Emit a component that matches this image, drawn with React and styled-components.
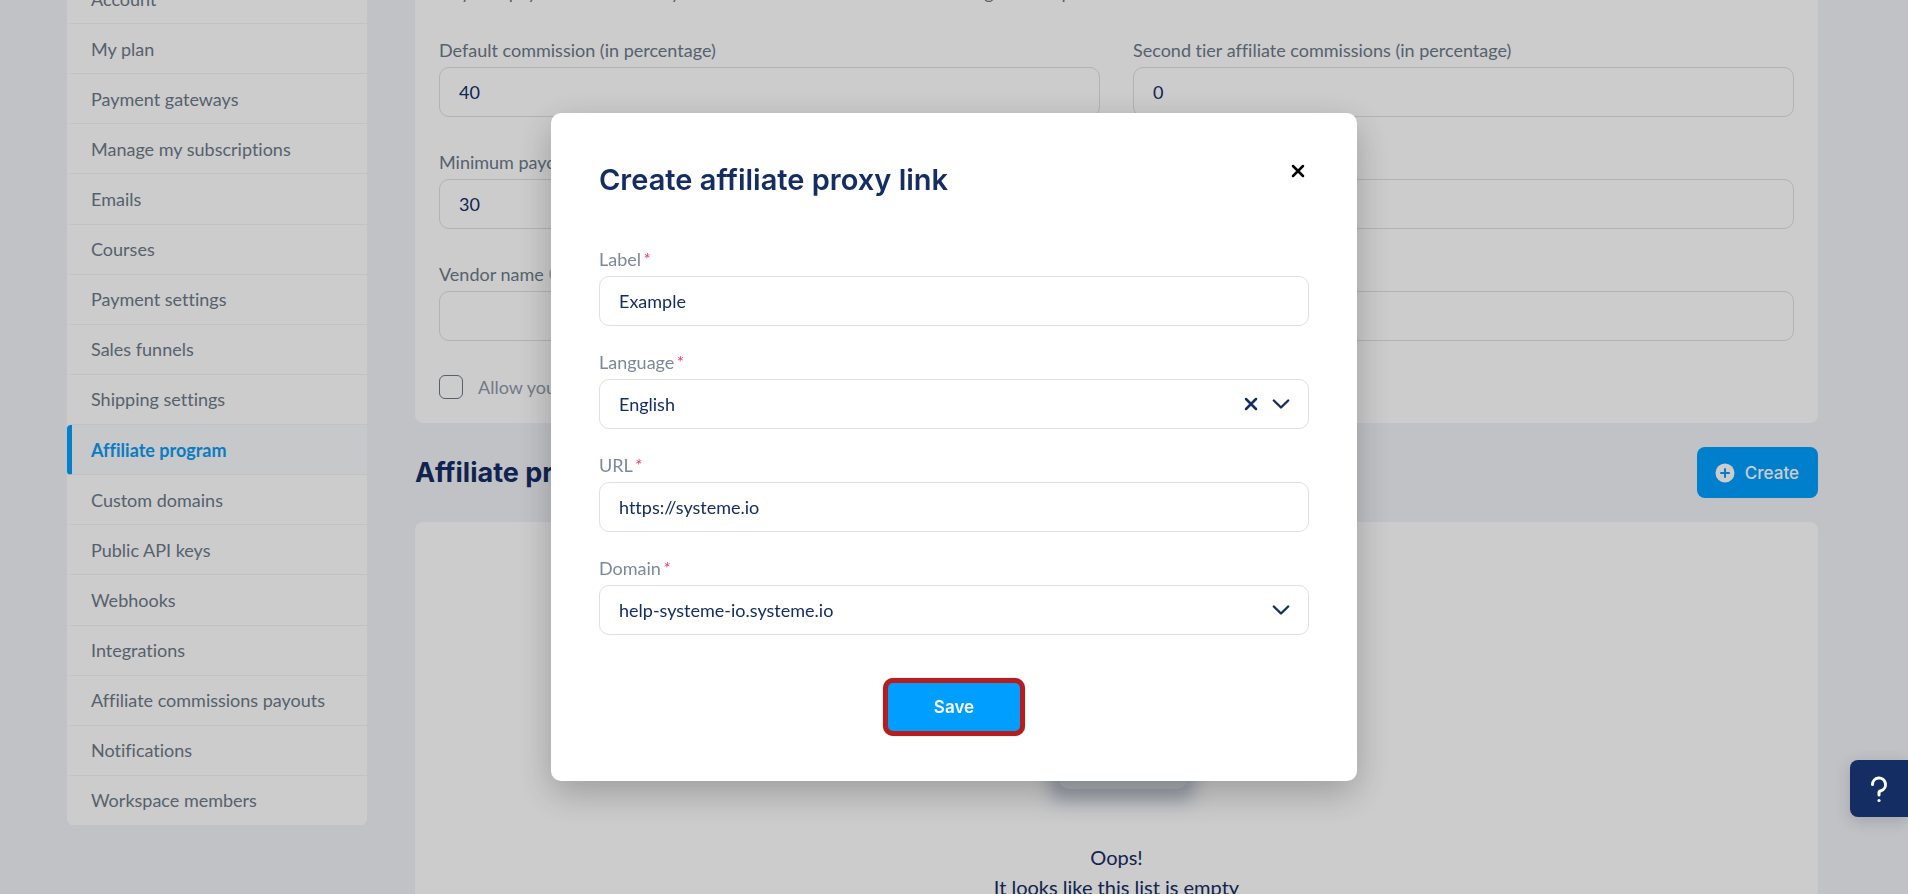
import React, { useState } from "react";
import styled, { createGlobalStyle } from "styled-components";

const GlobalStyle = createGlobalStyle`
  * {
    box-sizing: border-box;
  }

  body {
    margin: 0;
    overflow: hidden;
    background-color: #f1f3f8;
    color: #142d63;
    font-family: Lato, sans-serif;
    font-size: 18px;
    font-variant-ligatures: none;
    line-height: 22px;
  }

  button,
  input,
  select {
    font: inherit;
    font-variant-ligatures: none;
    color: inherit;
  }
`;

const Page = styled.div`
  display: flex;
  align-items: flex-start;
  gap: 48px;
  height: 100vh;
  padding: 0 90px 0 67px;
  overflow: hidden;
`;

const Sidebar = styled.nav`
  display: grid;
  grid-auto-rows: 1fr;
  flex: 0 0 300px;
  min-height: 852px;
  margin-top: -26px;
  background-color: #ffffff;
  border-radius: 8px;
  overflow: hidden;
`;

const SidebarLink = styled.a`
  display: flex;
  align-items: center;
  padding: 0 19px;
  border-left: 5px solid ${({ $active }) => ($active ? "#009fff" : "transparent")};
  border-bottom: 1px solid #f1f3f5;
  border-radius: ${({ $active }) => ($active ? "4px 0 0 4px" : "0")};
  background-color: ${({ $active }) => ($active ? "#f8fafc" : "#ffffff")};
  color: ${({ $active }) => ($active ? "#0d9bf5" : "#6c7a89")};
  font-weight: ${({ $active }) => ($active ? 700 : 400)};
  text-decoration: none;
`;

const Content = styled.main`
  flex: 1;
  min-width: 0;
  margin-top: -43px;
`;

const Card = styled.section`
  padding: 24px;
  background-color: #ffffff;
  border-radius: 8px;
`;

const Description = styled.p`
  margin: 0 0 36px;
  color: #6c7a89;
`;

const SettingsGrid = styled.div`
  display: grid;
  grid-template-columns: 1fr 1fr;
  gap: 34px 33px;
`;

const Field = styled.div`
  display: flex;
  flex-direction: column;
  gap: 6px;
`;

const Label = styled.label`
  display: flex;
  align-items: center;
  color: ${({ $muted }) => ($muted ? "#7c889b" : "#6c7a89")};
`;

const Required = styled.span`
  margin-left: 2px;
  color: #ef3e6b;
  font-style: italic;
`;

const Input = styled.input`
  width: 100%;
  height: 50px;
  padding: 0 19px;
  border: 1px solid #dfe0e2;
  border-radius: 10px;
  background-color: #ffffff;
  outline: none;
`;

const CheckRow = styled.label`
  display: flex;
  align-items: center;
  gap: 15px;
  margin-top: 34px;
  color: #9099a9;
`;

const Checkbox = styled.input`
  appearance: none;
  width: 24px;
  height: 24px;
  margin: 0;
  border: 1px solid #6c7a89;
  border-radius: 6px;
`;

const SectionHeader = styled.div`
  display: flex;
  align-items: center;
  justify-content: space-between;
  padding: 24px 0;
`;

const SectionTitle = styled.h2`
  margin: 0;
  font-family: Inter, sans-serif;
  font-size: 27px;
  font-weight: 700;
  line-height: 32px;
`;

const CreateButton = styled.button`
  display: flex;
  align-items: center;
  gap: 10px;
  height: 51px;
  padding: 0 19px 0 18px;
  border: none;
  border-radius: 8px;
  background-color: #009fff;
  color: #ffffff;
  font-family: Inter, sans-serif;
  font-size: 17px;
  font-weight: 500;
  cursor: pointer;
`;

const EmptyCard = styled(Card)`
  display: flex;
  flex-direction: column;
  align-items: center;
  min-height: 480px;
  padding-top: 48px;
`;

const EmptyText = styled.p`
  margin: 53px 0 0;
  font-size: 20px;
  line-height: 30px;
  text-align: center;
`;

const HelpButton = styled.button`
  position: fixed;
  right: 0;
  bottom: 77px;
  z-index: 3;
  display: flex;
  align-items: center;
  justify-content: center;
  width: 58px;
  height: 57px;
  padding: 0;
  border: none;
  border-radius: 8px 0 0 8px;
  background-color: #142d63;
  box-shadow: 0 4px 16px rgba(0, 0, 0, 0.16);
  cursor: pointer;
`;

const Overlay = styled.div`
  position: fixed;
  inset: 0;
  z-index: 2;
  display: flex;
  align-items: center;
  justify-content: center;
  background-color: rgba(0, 0, 0, 0.2);
`;

const Modal = styled.form`
  width: 100%;
  max-width: 806px;
  padding: 48px 48px 45px;
  border-radius: 10px;
  background-color: #ffffff;
  box-shadow: 0 12px 36px rgba(0, 0, 0, 0.24);
`;

const ModalHeader = styled.header`
  display: flex;
  align-items: flex-start;
  justify-content: space-between;
  margin-bottom: 50px;
`;

const ModalTitle = styled.h1`
  margin: 0;
  font-family: Inter, sans-serif;
  font-size: 29px;
  font-weight: 600;
  line-height: 37px;
`;

const IconButton = styled.button`
  display: flex;
  align-items: center;
  justify-content: center;
  width: 22px;
  height: 20px;
  padding: 0;
  border: none;
  background: none;
  color: ${({ $dark }) => ($dark ? "#000000" : "inherit")};
  cursor: pointer;
`;

const ModalFields = styled.div`
  display: flex;
  flex-direction: column;
  gap: 25px;
`;

const SelectShell = styled.div`
  position: relative;
`;

const Select = styled.select`
  appearance: none;
  width: 100%;
  height: 50px;
  padding: 0 19px;
  border: 1px solid #dfe0e2;
  border-radius: 10px;
  background-color: #ffffff;
  outline: none;
`;

const SelectIcons = styled.div`
  position: absolute;
  top: 0;
  right: 19px;
  bottom: 0;
  display: flex;
  align-items: center;
  gap: 10px;
  pointer-events: none;

  button {
    pointer-events: auto;
  }
`;

const ModalFooter = styled.footer`
  display: flex;
  justify-content: center;
  margin-top: 43px;
`;

const SaveButton = styled.button`
  width: 142px;
  height: 58px;
  border: 5px solid #b91c1c;
  border-radius: 10px;
  background-color: #009fff;
  box-shadow: 0 0 1px rgba(0, 0, 0, 0.6);
  color: #ffffff;
  font-family: Inter, sans-serif;
  font-size: 17px;
  font-weight: 600;
  cursor: pointer;
`;

const HintIcon = styled.svg`
  margin-left: 5px;
`;

const links = [
  "Account",
  "My plan",
  "Payment gateways",
  "Manage my subscriptions",
  "Emails",
  "Courses",
  "Payment settings",
  "Sales funnels",
  "Shipping settings",
  "Affiliate program",
  "Custom domains",
  "Public API keys",
  "Webhooks",
  "Integrations",
  "Affiliate commissions payouts",
  "Notifications",
  "Workspace members",
];

const settings = [
  { id: "commission", label: "Default commission (in percentage)", value: "40" },
  { id: "second-tier", label: "Second tier affiliate commissions (in percentage)", value: "0" },
  { id: "min-payout", label: "Minimum payout", value: "30" },
  { id: "payout-delay", label: "Payout delay", value: "" },
  { id: "vendor", label: "Vendor name", value: "", hint: true },
  { id: "vendor-address", label: "Vendor address", value: "" },
];

const CrossIcon = () => (
  <svg width="14" height="14" viewBox="0 0 14 14" fill="none" stroke="currentColor" strokeWidth="2.5" strokeLinecap="round">
    <path d="M2 2l10 10M12 2L2 12" />
  </svg>
);

const ChevronIcon = () => (
  <svg width="18" height="12" viewBox="0 0 18 12" fill="none" stroke="currentColor" strokeWidth="2.4" strokeLinecap="round" strokeLinejoin="round">
    <path d="M1.800 2.500l7.200 7 7.200-7" />
  </svg>
);

const PlusIcon = () => (
  <svg width="20" height="20" viewBox="0 0 20 20">
    <circle cx="10" cy="10" r="9.5" fill="#ffffff" />
    <path d="M10 6v8M6 10h8" stroke="#009fff" strokeWidth="2" strokeLinecap="round" />
  </svg>
);

const QuestionIcon = () => (
  <svg width="18" height="28" viewBox="0 0 18 28" fill="none">
    <path d="M2.500 9.500a6.500 6.500 0 1 1 8.500 6.200c-1.300.4-2 .8-2 2v2.300" stroke="#ffffff" strokeWidth="3" strokeLinecap="round" />
    <circle cx="9" cy="25.500" r="1.600" fill="#ffffff" />
  </svg>
);

const EmptyIllustration = () => (
  <svg width="240" height="219" viewBox="0 0 240 219" overflow="visible">
    <defs>
      <filter id="soft" x="-30%" y="-30%" width="160%" height="160%">
        <feGaussianBlur stdDeviation="9" />
      </filter>
    </defs>
    <rect x="52" y="40" width="146" height="191" rx="12" fill="#bcc5d1" filter="url(#soft)" />
    <rect x="62" y="20" width="128" height="199" rx="10" fill="#d4d9e0" />
  </svg>
);

const ModalField = ({ id, label, children }) => (
  <Field>
    <Label htmlFor={id} $muted>
      {label}
      <Required>*</Required>
    </Label>
    {children}
  </Field>
);

const App = () => {
  const [label, setLabel] = useState("Example");
  const [language, setLanguage] = useState("English");
  const [url, setUrl] = useState("https://systeme.io");

  const handleSubmit = (e) => {
    e.preventDefault();
    console.log("Save proxy link:", label, language, url);
  };

  return (
    <>
      <GlobalStyle />
      <Page>
        <Sidebar>
          {links.map((link) => (
            <SidebarLink key={link} href="#" $active={link === "Affiliate program"}>
              {link}
            </SidebarLink>
          ))}
        </Sidebar>
        <Content>
          <Card>
            <Description>
              Any due payouts are sent daily and include the total of affiliate earnings on the plan
            </Description>
            <SettingsGrid>
              {settings.map((item) => (
                <Field key={item.id}>
                  <Label htmlFor={item.id}>
                    {item.label}
                    {item.hint && (
                      <HintIcon width="16" height="16" viewBox="0 0 16 16" fill="none">
                        <circle cx="8" cy="8" r="7" stroke="#c4c9d1" strokeWidth="2" />
                      </HintIcon>
                    )}
                  </Label>
                  <Input id={item.id} defaultValue={item.value} />
                </Field>
              ))}
            </SettingsGrid>
            <CheckRow>
              <Checkbox type="checkbox" />
              Allow your affiliates
            </CheckRow>
          </Card>
          <SectionHeader>
            <SectionTitle>Affiliate proxy links</SectionTitle>
            <CreateButton type="button">
              <PlusIcon />
              Create
            </CreateButton>
          </SectionHeader>
          <EmptyCard>
            <EmptyIllustration />
            <EmptyText>
              Oops!
              <br />
              It looks like this list is empty
            </EmptyText>
          </EmptyCard>
        </Content>
      </Page>
      <Overlay>
        <Modal role="dialog" aria-labelledby="modal-title" onSubmit={handleSubmit}>
          <ModalHeader>
            <ModalTitle id="modal-title">Create affiliate proxy link</ModalTitle>
            <IconButton type="button" aria-label="Close" $dark>
              <CrossIcon />
            </IconButton>
          </ModalHeader>
          <ModalFields>
            <ModalField id="label" label="Label">
              <Input id="label" value={label} onChange={(e) => setLabel(e.target.value)} />
            </ModalField>
            <ModalField id="language" label="Language">
              <SelectShell>
                <Select id="language" value={language} onChange={(e) => setLanguage(e.target.value)}>
                  <option value="" />
                  <option>English</option>
                </Select>
                <SelectIcons>
                  <IconButton type="button" aria-label="Clear" onClick={() => setLanguage("")}>
                    <CrossIcon />
                  </IconButton>
                  <ChevronIcon />
                </SelectIcons>
              </SelectShell>
            </ModalField>
            <ModalField id="url" label="URL">
              <Input id="url" value={url} onChange={(e) => setUrl(e.target.value)} />
            </ModalField>
            <ModalField id="domain" label="Domain">
              <SelectShell>
                <Select id="domain">
                  <option>help-systeme-io.systeme.io</option>
                </Select>
                <SelectIcons>
                  <ChevronIcon />
                </SelectIcons>
              </SelectShell>
            </ModalField>
          </ModalFields>
          <ModalFooter>
            <SaveButton type="submit">Save</SaveButton>
          </ModalFooter>
        </Modal>
      </Overlay>
      <HelpButton type="button" aria-label="Help">
        <QuestionIcon />
      </HelpButton>
    </>
  );
};

export default App;
